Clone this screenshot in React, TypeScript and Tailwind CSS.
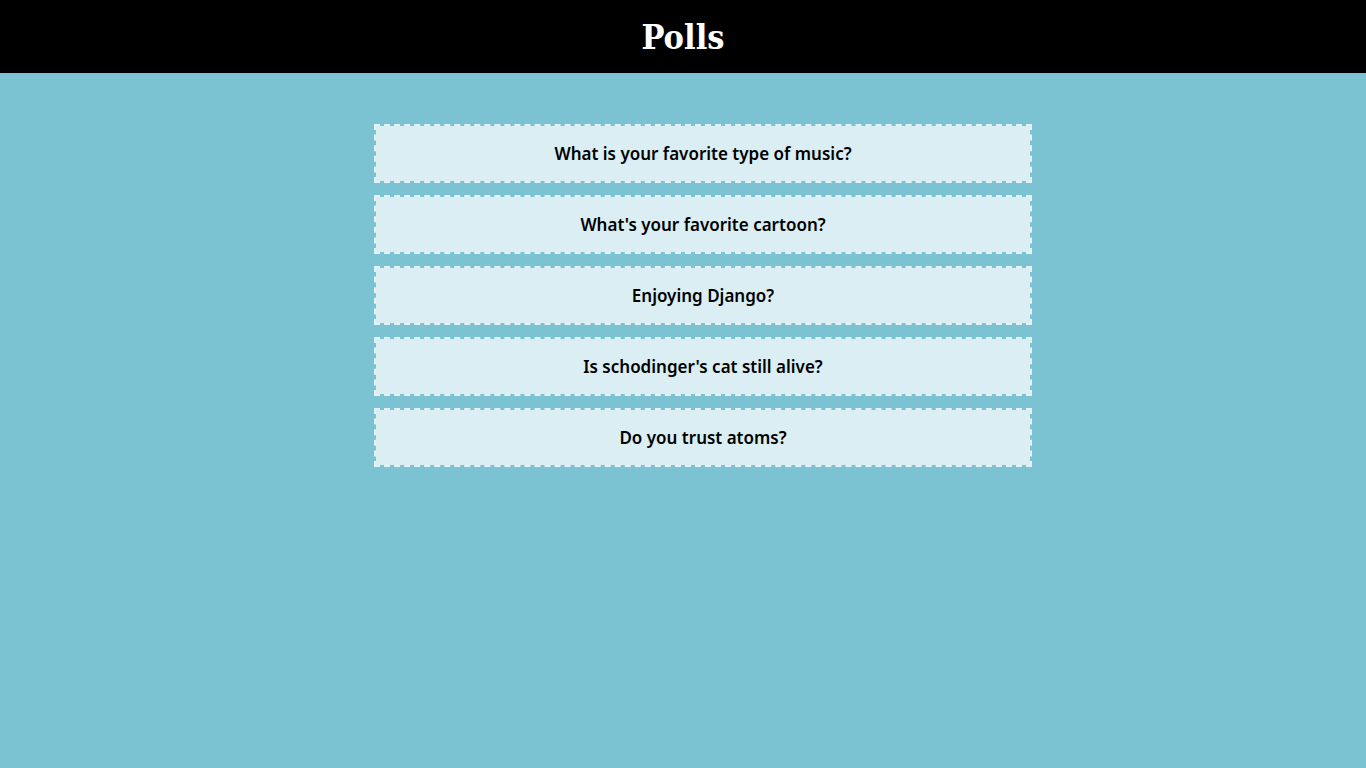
import React from 'react';

const polls = [
    'What is your favorite type of music?',
    "What's your favorite cartoon?",
    'Enjoying Django?',
    "Is schodinger's cat still alive?",
    'Do you trust atoms?',
];

const App: React.FC = () => {
    return (
        <div className="min-h-screen bg-[#7bc2d2]">
            <header className="h-[73px] bg-black flex items-center justify-center">
                <h1 className="text-white text-[34px] leading-none pt-[1px] font-bold font-['DejaVu_Serif_Condensed','DejaVu_Serif',serif]">Polls</h1>
            </header>

            <ul className="w-[658px] ml-[374px] pt-[51px] flex flex-col gap-[12px]">
                {polls.map((q) => (
                    <li
                        key={q}
                        className="h-[59px] flex items-center justify-center bg-[#daeef3] bg-clip-padding border-2 border-dashed border-[#e2f2f6] text-black text-[17px] font-semibold font-['Noto_Sans',sans-serif]"
                    >
                        {q}
                    </li>
                ))}
            </ul>
        </div>
    );
};

export default App;
